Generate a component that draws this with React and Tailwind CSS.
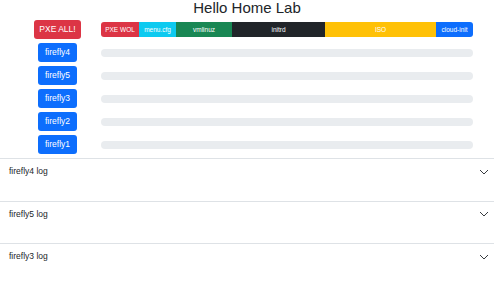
import React from 'react';

const stages = [
  { label: 'PXE WOL', width: 38, color: 'bg-[#dc3545]' },
  { label: 'menu.cfg', width: 37, color: 'bg-[#0dcaf0]' },
  { label: 'vmlinuz', width: 56, color: 'bg-[#198754]' },
  { label: 'initrd', width: 93, color: 'bg-[#212529]' },
  { label: 'ISO', width: 111, color: 'bg-[#ffc107]' },
  { label: 'cloud-init', width: 37, color: 'bg-[#0d6efd]' },
];

const hosts = ['firefly4', 'firefly5', 'firefly3', 'firefly2', 'firefly1'];
const logs = ['firefly4', 'firefly5', 'firefly3'];

const Chevron = () => (
  <svg width="10" height="6" viewBox="0 0 10 6" fill="none" className="text-[#212529]">
    <path d="M1 1L5 5L9 1" stroke="currentColor" strokeWidth="0.9" />
  </svg>
);

export default function App() {
  return (
    <div className="w-[494px] h-[282px] overflow-hidden bg-white text-[#212529] font-['Liberation_Sans',Arial,sans-serif]">
      <h1 className="text-center text-[15px] leading-[16px] font-medium">Hello Home Lab</h1>

      <div className="mt-[4px] flex flex-col gap-[4px]">
        <div className="flex items-center h-[19px]">
          <div className="w-[101px] pl-[14px] flex justify-center">
            <button className="h-[19px] px-[5px] rounded-[3px] bg-[#dc3545] text-white text-[8.5px] leading-[19px]">
              PXE ALL!
            </button>
          </div>
          <div className="flex flex-1 mr-[21px] h-[15px] rounded-[3px] overflow-hidden">
            {stages.map((s) => (
              <div
                key={s.label}
                className={`${s.color} flex items-center justify-center text-white text-[6.5px] leading-[15px] shrink-0`}
                style={{ width: s.width }}
              >
                {s.label}
              </div>
            ))}
          </div>
        </div>

        {hosts.map((h) => (
          <div key={h} className="flex items-center h-[19px]">
            <div className="w-[101px] pl-[14px] flex justify-center">
              <button className="h-[19px] px-[7px] rounded-[3px] bg-[#0d6efd] text-white text-[8.5px] leading-[19px]">
                {h}
              </button>
            </div>
            <div className="flex-1 mr-[21px] h-[8px] rounded-[4px] bg-[#e9ecef]" />
          </div>
        ))}
      </div>

      <div className="mt-[4px]">
        {logs.map((l) => (
          <div key={l} className="border-t border-[#dee2e6] h-[42.5px]">
            <div className="flex items-center justify-between pl-[9px] pr-[5px] pt-[6px] h-[19px]">
              <span className="text-[8.5px] leading-[13px]">{l} log</span>
              <Chevron />
            </div>
          </div>
        ))}
      </div>
    </div>
  );
}
